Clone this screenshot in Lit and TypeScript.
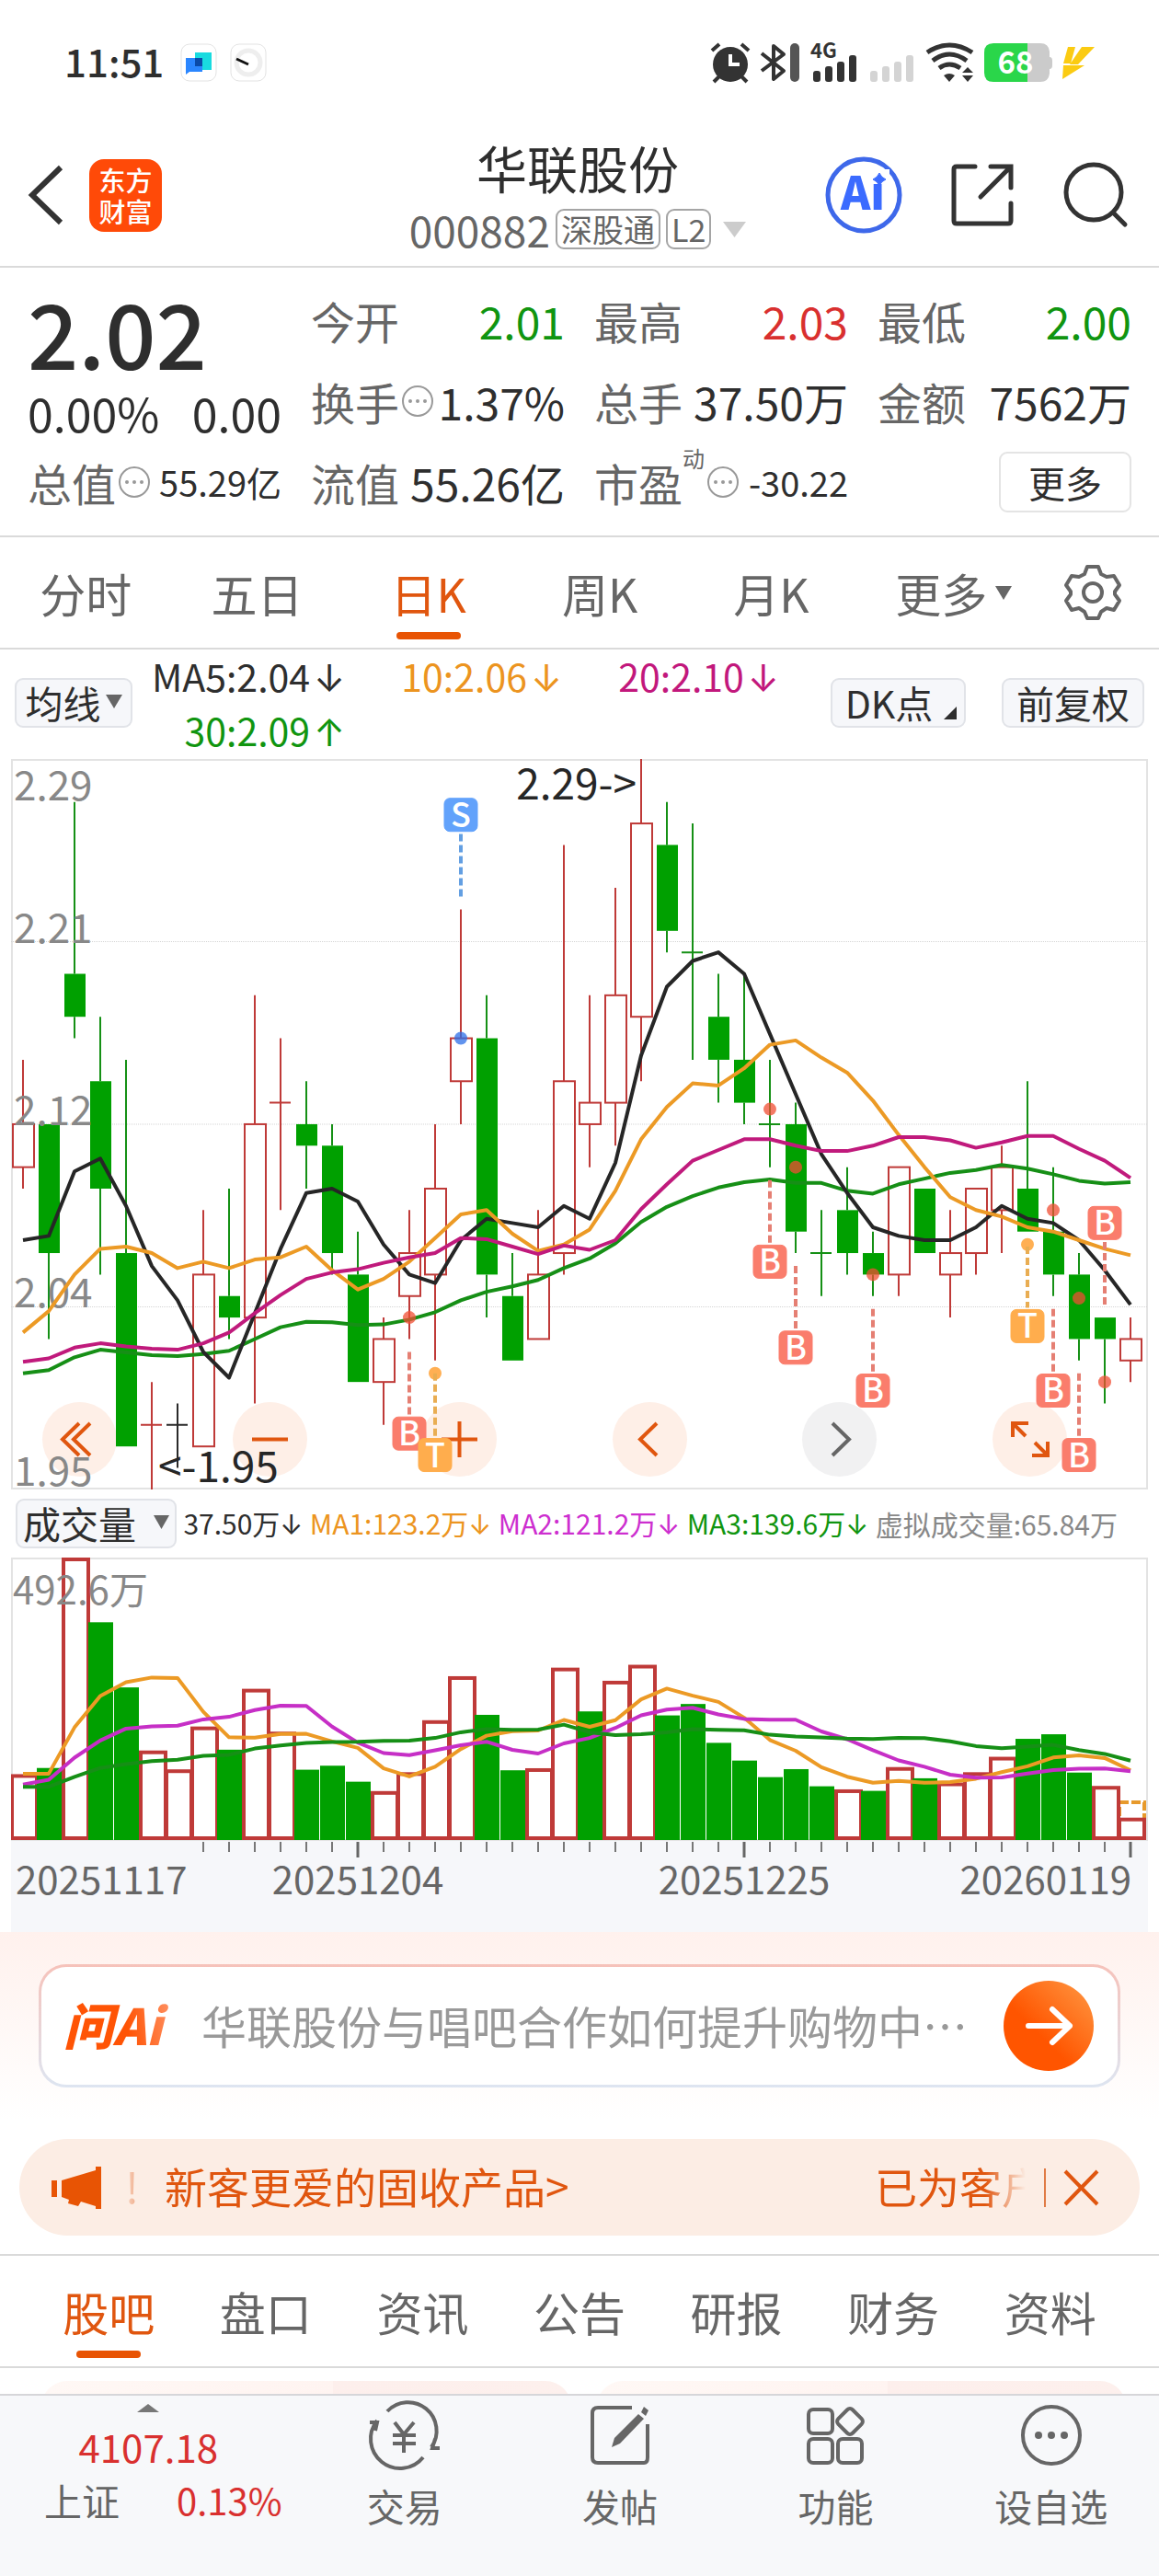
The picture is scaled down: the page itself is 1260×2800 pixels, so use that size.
import { LitElement, html, svg, css } from "lit";
import { customElement, state } from "lit/decorators.js";
import { classMap } from "lit/directives/class-map.js";

type Candle = [high: number, top: number, bottom: number, low: number, kind: "r" | "g" | "k", volume: number];

/* high, body top, body bottom, low, direction, volume (in 万) */
const CANDLES: Candle[] = [
  [2.15, 2.12, 2.1, 2.09, "r", 113.6],
  [2.12, 2.12, 2.06, 2.02, "g", 126],
  [2.27, 2.19, 2.17, 2.16, "g", 492.6],
  [2.17, 2.14, 2.09, 2.05, "g", 381],
  [2.15, 2.06, 1.97, 1.97, "g", 267],
  [2.0, 1.98, 1.98, 1.95, "r", 155],
  [1.99, 1.98, 1.98, 1.96, "k", 122],
  [2.08, 2.05, 1.97, 1.97, "r", 197],
  [2.09, 2.04, 2.03, 2.02, "g", 158],
  [2.18, 2.12, 2.03, 1.99, "r", 263],
  [2.16, 2.13, 2.13, 2.08, "r", 188],
  [2.14, 2.12, 2.11, 2.09, "g", 123],
  [2.12, 2.11, 2.06, 2.05, "g", 130],
  [2.07, 2.05, 2.0, 2.0, "g", 102],
  [2.03, 2.02, 2.0, 1.98, "r", 84],
  [2.08, 2.06, 2.04, 2.02, "r", 117],
  [2.12, 2.09, 2.05, 2.01, "r", 208],
  [2.22, 2.16, 2.14, 2.12, "r", 285],
  [2.18, 2.16, 2.05, 2.03, "g", 219],
  [2.06, 2.04, 2.01, 2.01, "g", 122],
  [2.08, 2.05, 2.02, 2.02, "r", 124],
  [2.25, 2.14, 2.06, 2.05, "r", 300],
  [2.18, 2.13, 2.12, 2.1, "r", 225],
  [2.23, 2.18, 2.13, 2.11, "r", 277],
  [2.29, 2.26, 2.17, 2.14, "r", 305],
  [2.27, 2.25, 2.21, 2.2, "g", 218],
  [2.26, 2.2, 2.2, 2.15, "g", 238],
  [2.19, 2.17, 2.15, 2.13, "g", 170],
  [2.19, 2.15, 2.13, 2.12, "g", 139],
  [2.15, 2.12, 2.12, 2.1, "g", 110],
  [2.13, 2.12, 2.07, 2.06, "g", 124],
  [2.08, 2.06, 2.06, 2.04, "g", 94],
  [2.1, 2.08, 2.06, 2.05, "g", 87],
  [2.07, 2.06, 2.05, 2.04, "g", 86],
  [2.1, 2.1, 2.05, 2.04, "r", 126],
  [2.09, 2.09, 2.06, 2.06, "g", 108],
  [2.08, 2.06, 2.05, 2.03, "r", 99],
  [2.09, 2.09, 2.06, 2.05, "r", 117],
  [2.11, 2.1, 2.08, 2.06, "r", 144],
  [2.14, 2.09, 2.07, 2.07, "g", 177],
  [2.1, 2.07, 2.05, 2.04, "g", 185],
  [2.06, 2.05, 2.02, 2.01, "g", 118],
  [2.03, 2.03, 2.02, 1.99, "g", 93],
  [2.03, 2.02, 2.01, 2.0, "r", 37.5],
];

/* Days whose volume column is drawn hollow: the close was not below the previous close. */
const HOLLOW_VOLUME = new Set([0, 2, 5, 6, 7, 9, 10, 14, 15, 16, 17, 20, 21, 23, 24, 32, 34, 36, 37, 38, 42, 43]);

const CLOSES = CANDLES.map((c) => (c[4] === "r" ? c[1] : c[2]));
const VOLUMES = CANDLES.map((c) => c[5]);

/* `lead` holds the averages of the days that need history from before the first candle. */
const movingAverage = (values: number[], span: number, lead: number[]) =>
  values.map((_, i) =>
    i < lead.length ? lead[i] : values.slice(i - span + 1, i + 1).reduce((a, b) => a + b, 0) / span,
  );

const PRICE_LINES = [
  { tone: "ma30", points: movingAverage(CLOSES, 30, [2.004, 2.0055, 2.0115, 2.015, 2.0138, 2.0125, 2.012, 2.013, 2.0145, 2.02, 2.0255, 2.028, 2.0278, 2.0265, 2.0268, 2.029, 2.0325, 2.038, 2.042, 2.0445, 2.0475, 2.053, 2.0575, 2.0645, 2.0745, 2.0815, 2.0865, 2.0905, 2.093]) },
  { tone: "ma5", points: movingAverage(CLOSES, 5, [2.066, 2.068, 2.098, 2.104]) },
  { tone: "ma10", points: movingAverage(CLOSES, 10, [2.023, 2.033, 2.05, 2.062, 2.063, 2.06, 2.053, 2.056, 2.053]) },
  { tone: "ma20", points: movingAverage(CLOSES, 20, [2.0094, 2.011, 2.016, 2.018, 2.0165, 2.0155, 2.015, 2.018, 2.023, 2.032, 2.0405, 2.048, 2.051, 2.0525, 2.0555, 2.058, 2.06, 2.067, 2.0665]) },
];

const VOLUME_LINES = [
  { tone: "ma10", points: movingAverage(VOLUMES, 5, [116, 116, 197, 252]) },
  { tone: "vma2", points: movingAverage(VOLUMES, 10, [97, 105.5, 144, 174, 195, 199, 200, 211, 215.5]) },
  { tone: "ma30", points: movingAverage(VOLUMES, 20, [93, 93, 110.5, 126, 133, 138, 140.5, 147.5, 149, 160, 165.5, 170, 171.5, 172, 173.5, 174, 178.5, 188.5, 194]) },
];

/* Trade marks: day, letter, dot price, dash start price, badge centre price */
const MARKS: [number, "S" | "B" | "T", number, number, number][] = [
  [17, "S", 2.16, 2.226, 2.264],
  [15, "B", 2.03, 2.014, 1.976],
  [16, "T", 2.004, 2.004, 1.966],
  [29, "B", 2.127, 2.094, 2.056],
  [30, "B", 2.1, 2.054, 2.016],
  [33, "B", 2.05, 2.034, 1.996],
  [39, "T", 2.064, 2.063, 2.026],
  [40, "B", 2.08, 2.034, 1.996],
  [41, "B", 2.039, 2.004, 1.966],
  [42, "B", 2, 2.036, 2.074],
];

const WIDTH = 1236;
const STEP = 28;
const centre = (i: number) => 13 + i * STEP;
const path = (points: number[], y: (v: number) => number) =>
  points.map((p, i) => `${centre(i)},${y(p).toFixed(1)}`).join(" ");

const chartStyles = css`
  :host { display: block; font-family: "Noto Sans CJK SC", sans-serif; }
  svg { display: block; width: 100%; height: auto; }
  .frame { fill: none; stroke: #e3e3e3; stroke-width: 2; }
  .grid { stroke: #d5d5d5; stroke-width: 1; stroke-dasharray: 1 1; }
  .r { fill: none; stroke: #bf3a38; stroke-width: 2; }
  .g { fill: #00a000; stroke: none; }
  .stem { stroke-width: 2; }
  .stem.g { stroke: #159015; }
  .stem.k { stroke: #2a2a2a; }
  .line { fill: none; stroke-width: 4; stroke-linejoin: round; }
  .ma5 { stroke: #262626; }
  .ma10 { stroke: #ec9a25; }
  .ma20 { stroke: #c01a7c; }
  .ma30 { stroke: #168f16; }
  .vma2 { stroke: #c62fc6; }
  .scale { fill: #888; font-size: 44px; }
  .extreme { fill: #262626; font-size: 46px; }
`;

@customElement("price-chart")
class PriceChart extends LitElement {
  static styles = [
    chartStyles,
    css`
      .plot { position: relative; }
      svg { position: relative; pointer-events: none; }
      .tools { position: absolute; left: 34px; right: 88px; bottom: 14px; display: flex; justify-content: space-between; }
      button { width: 81px; height: 81px; padding: 0; border: 0; border-radius: 50%; background: #feefe7; color: #e0560f; }
      button.off { background: #f1f1f2; color: #666; }
      button svg { width: 81px; height: 81px; fill: none; stroke: currentColor; stroke-width: 4; }
      .S { fill: #62a2fb; stroke: #62a2fb; }
      .B { fill: #fa7d6c; stroke: #fa7d6c; }
      .T { fill: #ffad4d; stroke: #ffad4d; }
      .dash { stroke-width: 4; stroke-dasharray: 8 4; fill: none; }
      .dash.S { stroke: #639fe2; }
      .dash.B { stroke: #e57f73; }
      .dash.T { stroke: #e9ad52; }
      .dot.S { fill: #2c6fe8; }
      .dot.B { fill: #f04d33; }
      .dot.T { fill: #ff9419; }
      .dot { stroke: none; opacity: 0.75; }
      .letter { fill: #fff; font-size: 36px; font-weight: 500; text-anchor: middle; }
    `,
  ];

  render() {
    const y = (p: number) => (2.29 - p) * 2335;
    const tools = [
      ["更早", "M40 23 22 40.500 40 58M52 23 34 40.500 52 58", ""],
      ["缩小", "M21 40.500H60", ""],
      ["放大", "M21 40.500H60M40.500 21V60", ""],
      ["前一日", "M48 23 30 40.500 48 58", ""],
      ["后一日", "M33 23 51 40.500 33 58", "off"],
      ["全屏", "M22 38V23H39M23 24 36 37M60 43V58H43M59 57 46 44", ""],
    ];
    return html`<div class="plot">
      <div class="tools">
        ${tools.map(([label, d, cls]) => html`<button class=${cls} aria-label=${label}><svg viewBox="0 0 81 81"><path d=${d} /></svg></button>`)}
      </div>
      <svg viewBox="0 0 ${WIDTH} 794" role="img" aria-label="日K线图">
        <rect class="frame" x="1" y="1" width=${WIDTH - 2} height="792" />
        ${[1, 2, 3].map((n) => svg`<line class="grid" x1="0" x2=${WIDTH} y1=${n * 198.5} y2=${n * 198.5} />`)}
        ${CANDLES.map(([high, top, bottom, low, kind], i) => {
          const x = centre(i);
          if (top === bottom) {
            return svg`<path class="stem ${kind}" d="M${x} ${y(high)}V${y(low)}M${x - 12} ${y(top)}H${x + 11}" />`;
          }
          return svg`<path class="stem ${kind}" d="M${x} ${y(high)}V${y(top)}M${x} ${y(bottom)}V${y(low)}" />
            <rect class=${kind} x=${x - 11} y=${y(top)} width="23" height=${y(bottom) - y(top)} />`;
        })}
        ${[2.29, 2.21, 2.12, 2.04, 1.95].map((p, n) => svg`<text class="scale" x="3" y=${[45, 200, 398, 596, 790][n]}>${p.toFixed(2)}</text>`)}
        ${PRICE_LINES.map((l) => svg`<polyline class="line ${l.tone}" points=${path(l.points, y)} />`)}
        ${MARKS.map(([day, letter, dot, dash, badge]) => {
          const x = centre(day);
          const by = y(badge);
          const end = by > y(dash) ? by - 20 : by + 20;
          return svg`<circle class="dot ${letter}" cx=${x} cy=${y(dot)} r="7" />
            <path class="dash ${letter}" d="M${x} ${y(dash)}V${end}" />
            <rect class=${letter} x=${x - 18} y=${by - 18} width="36" height="36" rx="6" />
            <text class="letter" x=${x} y=${by + 13}>${letter}</text>`;
        })}
        <text class="extreme" x="680" y="44" text-anchor="end">2.29-&gt;</text>
        <text class="extreme" x="160" y="786">&lt;-1.95</text>
      </svg>
    </div>`;
  }
}

@customElement("volume-chart")
class VolumeChart extends LitElement {
  static styles = [
    chartStyles,
    css`
      .r { stroke-width: 4; fill: #fff; }
      .estimate { fill: #fff; stroke: #e79a2c; stroke-width: 4; stroke-dasharray: 10 3; }
      .axis { fill: #f6f7fa; }
      .tick { stroke: #777; stroke-width: 2; }
      .tick.long { stroke: #666; stroke-width: 3; }
      .date, .max { font-size: 42px; fill: #666; }
      .max { fill: #888; }
    `,
  ];

  render() {
    const y = (v: number) => 307 - (v / 492.6) * 306;
    return html`<svg viewBox="0 0 ${WIDTH} 407" role="img" aria-label="成交量图">
      <rect class="frame" x="1" y="1" width=${WIDTH - 2} height="306" />
      <rect class="axis" x="0" y="308" width=${WIDTH} height="99" />
      <rect class="estimate" x=${centre(43) - 12} y=${y(65.84)} width="27" height=${305 - y(65.84)} />
      ${VOLUMES.map((v, i) => {
        const x = centre(i) - 13;
        return HOLLOW_VOLUME.has(i)
          ? svg`<rect class="r" x=${x + 1} y=${y(v) + 1} width="27" height=${304 - y(v)} />`
          : svg`<rect class="g" x=${x} y=${y(v)} width="27" height=${307 - y(v)} />`;
      })}
      <text class="max" x="2" y="51">492.6万</text>
      ${VOLUME_LINES.map((l) => svg`<polyline class="line ${l.tone}" points=${path(l.points, y)} />`)}
      ${VOLUMES.map((_, i) => {
        if (i < 7) return null;
        const long = i === 13 || i === 28 || i === 43;
        return svg`<line class="tick ${long ? "long" : ""}" x1=${centre(i)} x2=${centre(i)} y1="309" y2=${long ? 326 : 320} />`;
      })}
      <text class="date" x="5" y="366">20251117</text>
      <text class="date" x=${centre(13)} y="366" text-anchor="middle">20251204</text>
      <text class="date" x=${centre(28)} y="366" text-anchor="middle">20251225</text>
      <text class="date" x="1218" y="366" text-anchor="end">20260119</text>
    </svg>`;
  }
}

const info = html`<svg class="info" viewBox="0 0 36 36" aria-hidden="true">
  <circle cx="18" cy="18" r="16" fill="none" stroke="#999" stroke-width="2" />
  <g fill="#999"><circle cx="10" cy="18" r="2" /><circle cx="18" cy="18" r="2" /><circle cx="26" cy="18" r="2" /></g>
</svg>`;

const caret = (w: number, h: number) =>
  html`<svg class="caret" width=${w} height=${h} viewBox="0 0 10 10" preserveAspectRatio="none" aria-hidden="true"><path d="M0 0H10L5 10z" /></svg>`;

@customElement("app-root")
class AppRoot extends LitElement {
  @state() private period = "日K";
  @state() private section = "股吧";

  static styles = css`
    :host { display: block; background: #fff; color: #2e2e2e; font-family: "Noto Sans CJK SC", sans-serif; }
    * { box-sizing: border-box; }
    button, input { font: inherit; color: inherit; }
    button { padding: 0; border: 0; background: none; white-space: nowrap; }
    a { color: inherit; text-decoration: none; }
    svg { display: block; flex: none; overflow: visible; }
    .caret { fill: #666; }

    .status { display: flex; align-items: center; height: 135px; padding: 0 70px; }
    .clock { font-size: 42px; line-height: 60px; font-weight: 500; margin-right: 18px; padding-bottom: 4px; }
    .chips { display: flex; gap: 14px; }
    .signals { margin-left: auto; }

    .header { display: grid; grid-template-columns: 1fr auto 1fr; align-items: center; height: 156px; padding: 0 34px 0 30px; border-bottom: 2px solid #dadada; }
    .lead, .actions { display: flex; align-items: center; }
    .lead { gap: 28px; }
    .actions { gap: 54px; justify-content: flex-end; }
    .brand { display: grid; place-content: center; width: 79px; height: 79px; border-radius: 16px; background: #ff4a08; color: #fff; font-size: 29px; line-height: 34px; font-weight: 500; text-align: center; }
    .name { margin: 0; padding-top: 4px; font-size: 55px; line-height: 70px; font-weight: 400; text-align: center; }
    .codes { display: flex; align-items: center; gap: 6px; height: 66px; color: #666; font-size: 46px; line-height: 60px; }
    .tag { padding: 0 4px; border: 2px solid #a5a5a5; border-radius: 9px; font-size: 34px; line-height: 40px; }
    .codes .caret { fill: #ccc; margin-left: 7px; }

    .quote { display: grid; grid-template-columns: repeat(4, 1fr); grid-auto-rows: 88px; column-gap: 32px; padding: 13px 30px 14px; border-bottom: 2px solid #dadada; font-size: 48px; line-height: 60px; }
    .last { grid-row: span 2; }
    .price { font-size: 97px; line-height: 112px; font-weight: 500; }
    .change { display: flex; justify-content: space-between; font-size: 50px; line-height: 64px; }
    .fact { display: flex; align-items: center; white-space: nowrap; min-width: 0; }
    .label { color: #666; }
    .value { margin-left: auto; }
    .small { font-size: 38px; }
    .info { width: 36px; height: 36px; margin-left: 2px; }
    sup { align-self: flex-start; font-size: 24px; line-height: 36px; color: #666; }
    .up { color: #d9302f; }
    .down { color: #109510; }
    .more { justify-self: end; align-self: center; width: 144px; height: 66px; border: 2px solid #e4e4e4; border-radius: 9px; font-size: 40px; line-height: 60px; }

    .periods { display: grid; grid-template-columns: repeat(5, 186fr) 210fr 92fr; height: 122px; padding-right: 26px; border-bottom: 2px solid #dadada; font-size: 50px; }
    .tab { display: flex; align-items: center; justify-content: center; gap: 9px; position: relative; color: #666; line-height: 60px; }
    .tab.on { color: #e0560f; }
    .tab.on::after { content: ""; position: absolute; left: calc(50% - 35px); bottom: 9px; width: 70px; height: 8px; border-radius: 4px; background: #e85404; }

    .averages { display: flex; align-items: flex-start; height: 119px; padding: 0 16px; font-size: 41px; line-height: 56px; }
    .pill { display: flex; align-items: center; justify-content: center; height: 54px; padding-bottom: 3px; border: 2px solid #e1e3e8; border-radius: 9px; background: #f6f7fa; font-size: 41px; line-height: 50px; }
    .averages .pill { margin-top: 31px; }
    .ma-menu { width: 128px; gap: 5px; }
    .dk { width: 147px; gap: 12px; padding-left: 6px; margin: 0 39px 0 56px; }
    .dk svg { align-self: flex-end; margin-bottom: 4px; }
    .rights { width: 155px; }
    .readings { flex: 1; display: grid; grid-template-columns: 206fr 238fr 238fr; margin-left: 21px; justify-items: end; white-space: nowrap; }
    .arrow { font-family: "Inter", sans-serif; margin-left: 4px; }
    .c10 { color: #ec9420; }
    .c20 { color: #c2187c; }
    .c30 { color: #109510; }
    .cv2 { color: #cd2fcf; }
    .cest { color: #888; }

    .charts { padding: 0 12px; }
    .volumes { display: flex; align-items: center; justify-content: space-between; height: 74px; padding: 0 33px 0 5px; font-size: 30px; line-height: 40px; white-space: nowrap; }
    .volumes .arrow { margin-left: 0; }
    .vol-menu { width: 175px; gap: 19px; }

    .ask { padding: 35px 42px; background: linear-gradient(#fff1ed, #fff); }
    .askbox { display: flex; align-items: center; height: 134px; padding: 0 26px 0 24px; border: 3px solid transparent; border-radius: 30px; background: linear-gradient(#fff, #fff) padding-box, linear-gradient(#f6c2ba, #dde5f1) border-box; }
    .wen { width: 124px; margin-right: 26px; padding-bottom: 4px; font-size: 54px; line-height: 64px; font-weight: 900; font-style: italic; background: linear-gradient(80deg, #ff5405 55%, #ff9a70); background-clip: text; -webkit-background-clip: text; color: transparent; }
    .ask input { flex: 1; min-width: 0; height: 70px; padding: 0 0 4px; border: 0; outline: 0; background: none; font-size: 49px; }
    .ask input::placeholder { color: #999; opacity: 1; }
    .go { width: 98px; height: 98px; border-radius: 50%; background: linear-gradient(225deg, #ff9a45, #ff5500 60%); }

    .notice { display: flex; align-items: center; height: 105px; margin: 21px 21px 20px; padding: 0 44px 0 35px; border-radius: 53px; background: #fcede4; color: #e0560f; font-size: 46px; line-height: 60px; }
    .ticker { flex: 1; display: flex; min-width: 0; overflow: hidden; margin: 0 16px 0 12px; padding-bottom: 5px; white-space: nowrap; mask-image: linear-gradient(90deg, transparent 0, transparent 8px, #000 52px, #000 calc(100% - 48px), transparent calc(100% - 4px)); }
    .bang { width: 57px; padding-left: 14px; }
    .next { margin-left: auto; width: 168px; }
    .close { padding: 2px 0 2px 19px; border-left: 2px solid #e07b45; }

    .sections { display: grid; grid-template-columns: repeat(7, 1fr); height: 124px; padding: 0 33px; border-top: 2px solid #dadada; border-bottom: 2px solid #dadada; font-size: 50px; }
    .cards { display: grid; grid-template-columns: 1fr 1fr; gap: 28px; height: 28px; padding: 14px 36px 0 45px; overflow: hidden; }
    .card { height: 60px; border-radius: 28px; background: linear-gradient(90deg, #fff8f5, #fff4f1 55%, #fdefec 55%, #fdf0ed); }

    .dock { display: grid; grid-template-columns: 322fr repeat(4, 234fr); height: 199px; padding-top: 9px; border-top: 2px solid #d6d6d9; background: #f7f8fa; color: #666; font-size: 41px; line-height: 60px; }
    .index { display: flex; flex-direction: column; align-items: center; }
    .points { font-size: 42px; line-height: 58px; margin-top: 8px; }
    .ratio { display: flex; justify-content: space-between; width: 100%; padding: 0 16px 0 48px; line-height: 58px; }
    .ratio .up { font-size: 40px; }
    .dockitem { display: flex; flex-direction: column; align-items: center; gap: 12px; }
    .dockitem svg { fill: none; stroke: #666; stroke-width: 4; }
  `;

  private fact(label: string, value: string, tone = "", extra: unknown = null) {
    return html`<div class="fact"><span class="label">${label}</span>${extra}<span class="value ${tone}">${value}</span></div>`;
  }

  private reading(text: string, tone: string, arrow: string) {
    return html`<span class=${tone}>${text}<span class="arrow">${arrow}</span></span>`;
  }

  private tab(name: string, current: string, pick: () => void, extra: unknown = null) {
    return html`<button class=${classMap({ tab: true, on: name === current })} aria-pressed=${name === current} @click=${pick}>${name}${extra}</button>`;
  }

  render() {
    return html`
      <div class="status">
        <span class="clock">11:51</span>
        <span class="chips">
          <svg width="40" height="42" viewBox="0 0 40 42"><rect x="1" y="1" width="38" height="40" rx="9" fill="#fff" stroke="#e3e3e3" /><path d="M16 10h18v19H16z" fill="#19dbe0" /><path d="M6 16h18v15H10l-4 3z" fill="#2a86ff" /><path d="M16 16h8v9h-8z" fill="#0a4aa8" /></svg>
          <svg width="40" height="42" viewBox="0 0 40 42"><rect x="1" y="1" width="38" height="40" rx="9" fill="#fff" stroke="#e3e3e3" /><circle cx="20" cy="21" r="13" fill="none" stroke="#eee" stroke-width="5" /><path d="M7 17 20 23" stroke="#111" stroke-width="3" /></svg>
        </span>
        <svg class="signals" width="418" height="44" viewBox="0 0 418 44" role="img" aria-label="闹钟 蓝牙 4G Wi-Fi 电量 68">
          <g fill="#333" stroke="#333">
            <circle cx="22" cy="24" r="19" stroke="none" />
            <path d="M2 9 10 2M42 9 34 2M10 37 4 43M34 37 40 43" stroke-width="4" />
            <path d="M22 13v11h10" fill="none" stroke="#fff" stroke-width="4" />
            <path d="M56 12 80 31 69 40V4L80 13 56 31" fill="none" stroke-width="4" stroke-linejoin="round" />
            <rect x="87" y="1" width="10" height="42" rx="5" fill="#555" stroke="none" />
            <text x="109" y="17" font-size="22" font-weight="700" stroke="none" font-family="Noto Sans CJK SC">4G</text>
            <g stroke="none"><rect x="112" y="31" width="8" height="12" rx="3" /><rect x="125" y="26" width="8" height="17" rx="3" /><rect x="138" y="21" width="8" height="22" rx="3" /><rect x="151" y="14" width="8" height="29" rx="3" /></g>
            <g stroke="none" fill="#d4d4d4"><rect x="174" y="31" width="8" height="12" rx="3" /><rect x="187" y="26" width="8" height="17" rx="3" /><rect x="200" y="21" width="8" height="22" rx="3" /><rect x="213" y="14" width="8" height="29" rx="3" /></g>
            <g fill="none" stroke-width="5"><path d="M236 11Q260-5 285 11" /><path d="M242 20Q260 6 279 20" /><path d="M249 28Q260 20 272 28" /></g>
            <path d="M254 36Q260 32 266 36L260 43zM274 36H286L280 43zM274 33H286L280 27z" stroke="none" />
          </g>
          <path d="M345 1h14q9 0 10 9v6q3 0 3 4v5q0 4-3 4v5q-1 9-10 9h-14z" fill="#cbcbcb" />
          <path d="M308 1h37v42h-37q-10 0-10-10V11q0-10 10-10z" fill="#2ad64a" />
          <text x="332" y="34" font-size="33" font-weight="700" fill="#fff" text-anchor="middle" font-family="Noto Sans CJK SC">68</text>
          <path d="M389 5h8l-5 18h-8zM404 5h14l-18 19h-9zM384 25h23L383 40z" fill="#fbcb12" />
        </svg>
      </div>

      <header class="header">
        <div class="lead">
          <button aria-label="返回"><svg width="39" height="66" viewBox="0 0 39 66"><path d="M36 3 5 33 36 63" fill="none" stroke="#333" stroke-width="6" /></svg></button>
          <a class="brand" href="#">东方<br />财富</a>
        </div>
        <div>
          <h1 class="name">华联股份</h1>
          <div class="codes">000882<span class="tag">深股通</span><span class="tag">L2</span>${caret(25, 17)}</div>
        </div>
        <div class="actions">
          <button aria-label="Ai 助手">
            <svg width="82" height="84" viewBox="0 0 82 84"><circle cx="41" cy="42" r="39" fill="#fff" stroke="#3e68ea" stroke-width="5" />
              <text x="40" y="58" text-anchor="middle" font-family="Noto Sans CJK SC" font-size="49" font-weight="900" fill="#3b6bff">Ai</text>
              <rect x="49" y="14" width="20" height="16" fill="#fff" />
              <path d="M58 18Q60 23 65 25Q60 27 58 32Q56 27 51 25Q56 23 58 18z" fill="#3b6bff" stroke="#3b6bff" />
            </svg>
          </button>
          <button aria-label="分享"><svg width="68" height="68" viewBox="0 0 68 68" fill="none" stroke="#333" stroke-width="5" stroke-linecap="round"><path d="M26 3H6Q3 3 3 6V62Q3 65 6 65H62Q65 65 65 62V43M43 3H65V26M64 4 32 36" /></svg></button>
          <button aria-label="搜索"><svg width="70" height="72" viewBox="0 0 70 72" fill="none" stroke="#333" stroke-width="5" stroke-linecap="round"><circle cx="33" cy="33" r="30" /><path d="M54 55 67 68" /></svg></button>
        </div>
      </header>

      <section class="quote">
        <div class="last">
          <div class="price">2.02</div>
          <div class="change"><span>0.00%</span><span>0.00</span></div>
        </div>
        ${this.fact("今开", "2.01", "down")} ${this.fact("最高", "2.03", "up")} ${this.fact("最低", "2.00", "down")}
        ${this.fact("换手", "1.37%", "", info)} ${this.fact("总手", "37.50万")} ${this.fact("金额", "7562万")}
        ${this.fact("总值", "55.29亿", "small", info)} ${this.fact("流值", "55.26亿")}
        ${this.fact("市盈", "-30.22", "small", html`<sup>动</sup>${info}`)}
        <button class="more">更多</button>
      </section>

      <nav class="periods">
        ${["分时", "五日", "日K", "周K", "月K"].map((n) => this.tab(n, this.period, () => (this.period = n)))}
        ${this.tab("更多", this.period, () => (this.period = "更多"), caret(18, 15))}
        <button class="tab" aria-label="设置">
          <svg width="62" height="62" viewBox="0 0 62 62" fill="none" stroke="#666" stroke-width="4" stroke-linejoin="round"><path d="M25 3H37L40 11L46 14L54 13L60 23L55 30V33L60 40L54 50L46 48L40 52L37 59H25L22 52L16 48L8 50L2 40L7 33V30L2 23L8 13L16 14L22 11Z" /><circle cx="31" cy="31" r="10" /></svg>
        </button>
      </nav>

      <section class="averages">
        <button class="pill ma-menu">均线${caret(18, 15)}</button>
        <div class="readings">
          ${this.reading("MA5:2.04", "", "↓")} ${this.reading("10:2.06", "c10", "↓")} ${this.reading("20:2.10", "c20", "↓")}
          ${this.reading("30:2.09", "c30", "↑")}
        </div>
        <button class="pill dk">DK点<svg width="14" height="14" viewBox="0 0 14 14" aria-hidden="true"><path d="M14 0V14H0z" fill="#2e2e2e" /></svg></button>
        <button class="pill rights">前复权</button>
      </section>

      <div class="charts">
        <price-chart></price-chart>
        <div class="volumes">
          <button class="pill vol-menu">成交量${caret(17, 15)}</button>
          ${this.reading("37.50万", "", "↓")} ${this.reading("MA1:123.2万", "c10", "↓")}
          ${this.reading("MA2:121.2万", "cv2", "↓")} ${this.reading("MA3:139.6万", "c30", "↓")}
          <span class="cest">虚拟成交量:65.84万</span>
        </div>
        <volume-chart></volume-chart>
      </div>

      <section class="ask">
        <div class="askbox">
          <label class="wen" for="question">问Ai</label>
          <input id="question" type="text" placeholder="华联股份与唱吧合作如何提升购物中…" />
          <button class="go" aria-label="提问"><svg width="98" height="98" viewBox="0 0 98 98" fill="none" stroke="#fff" stroke-width="6" stroke-linecap="round" stroke-linejoin="round"><path d="M27 49H72M53 31 72 49 53 67" /></svg></button>
        </div>
      </section>

      <section class="notice">
        <svg width="54" height="46" viewBox="0 0 54 46" fill="#e85404" aria-hidden="true"><path d="M0 15H6V33H0zM11 15 48 4V0H54V46H48V43L32 38 29 43 18 40 19 36 11 33z" /></svg>
        <div class="ticker"><span class="bang">!</span><a href="#">新客更爱的固收产品&gt;</a><span class="next">已为客户</span></div>
        <button class="close" aria-label="关闭"><svg width="39" height="38" viewBox="0 0 39 38"><path d="M2 1 37 37M37 1 2 37" stroke="#e0560f" stroke-width="4" /></svg></button>
      </section>

      <nav class="sections">
        ${["股吧", "盘口", "资讯", "公告", "研报", "财务", "资料"].map((n) => this.tab(n, this.section, () => (this.section = n)))}
      </nav>
      <div class="cards"><div class="card"></div><div class="card"></div></div>

      <footer class="dock">
        <div class="index">
          <svg width="24" height="9" viewBox="0 0 24 9" aria-hidden="true"><path d="M12 0 24 9H0z" fill="#777" /></svg>
          <span class="points up">4107.18</span>
          <span class="ratio"><span>上证</span><span class="up">0.13%</span></span>
        </div>
        <button class="dockitem">
          <svg width="78" height="68" viewBox="0 0 78 68"><path d="M20 8A31 31 0 0 1 68 47M72 38 69 48H77M9 18A31 31 0 0 0 59 58M1 20H9L7 29" /><path d="M28 20 38 33 49 20M38 33V53M26 34H51M26 43H51" /></svg>交易
        </button>
        <button class="dockitem">
          <svg width="68" height="68" viewBox="0 0 68 68"><path d="M47 4H10Q4 4 4 10V58Q4 64 10 64H60Q64 64 64 58V22" /><path d="M54 11 60 16 34 43 25 47 28 37z" fill="#666" stroke="none" /><path d="M60 3 65 7 62 13 57 9z" fill="#666" stroke="none" /></svg>发帖
        </button>
        <button class="dockitem">
          <svg width="68" height="68" viewBox="0 0 68 68"><rect x="5" y="6" width="26" height="26" rx="5" /><rect x="5" y="38" width="26" height="26" rx="5" /><rect x="37" y="38" width="26" height="26" rx="5" /><rect x="39" y="8" width="22" height="22" rx="4" transform="rotate(45 50 19)" /></svg>功能
        </button>
        <button class="dockitem">
          <svg width="68" height="68" viewBox="0 0 68 68"><circle cx="34" cy="34" r="31" /><g fill="#666" stroke="none"><circle cx="20" cy="34" r="4" /><circle cx="34" cy="34" r="4" /><circle cx="48" cy="34" r="4" /></g></svg>设自选
        </button>
      </footer>
    `;
  }
}
